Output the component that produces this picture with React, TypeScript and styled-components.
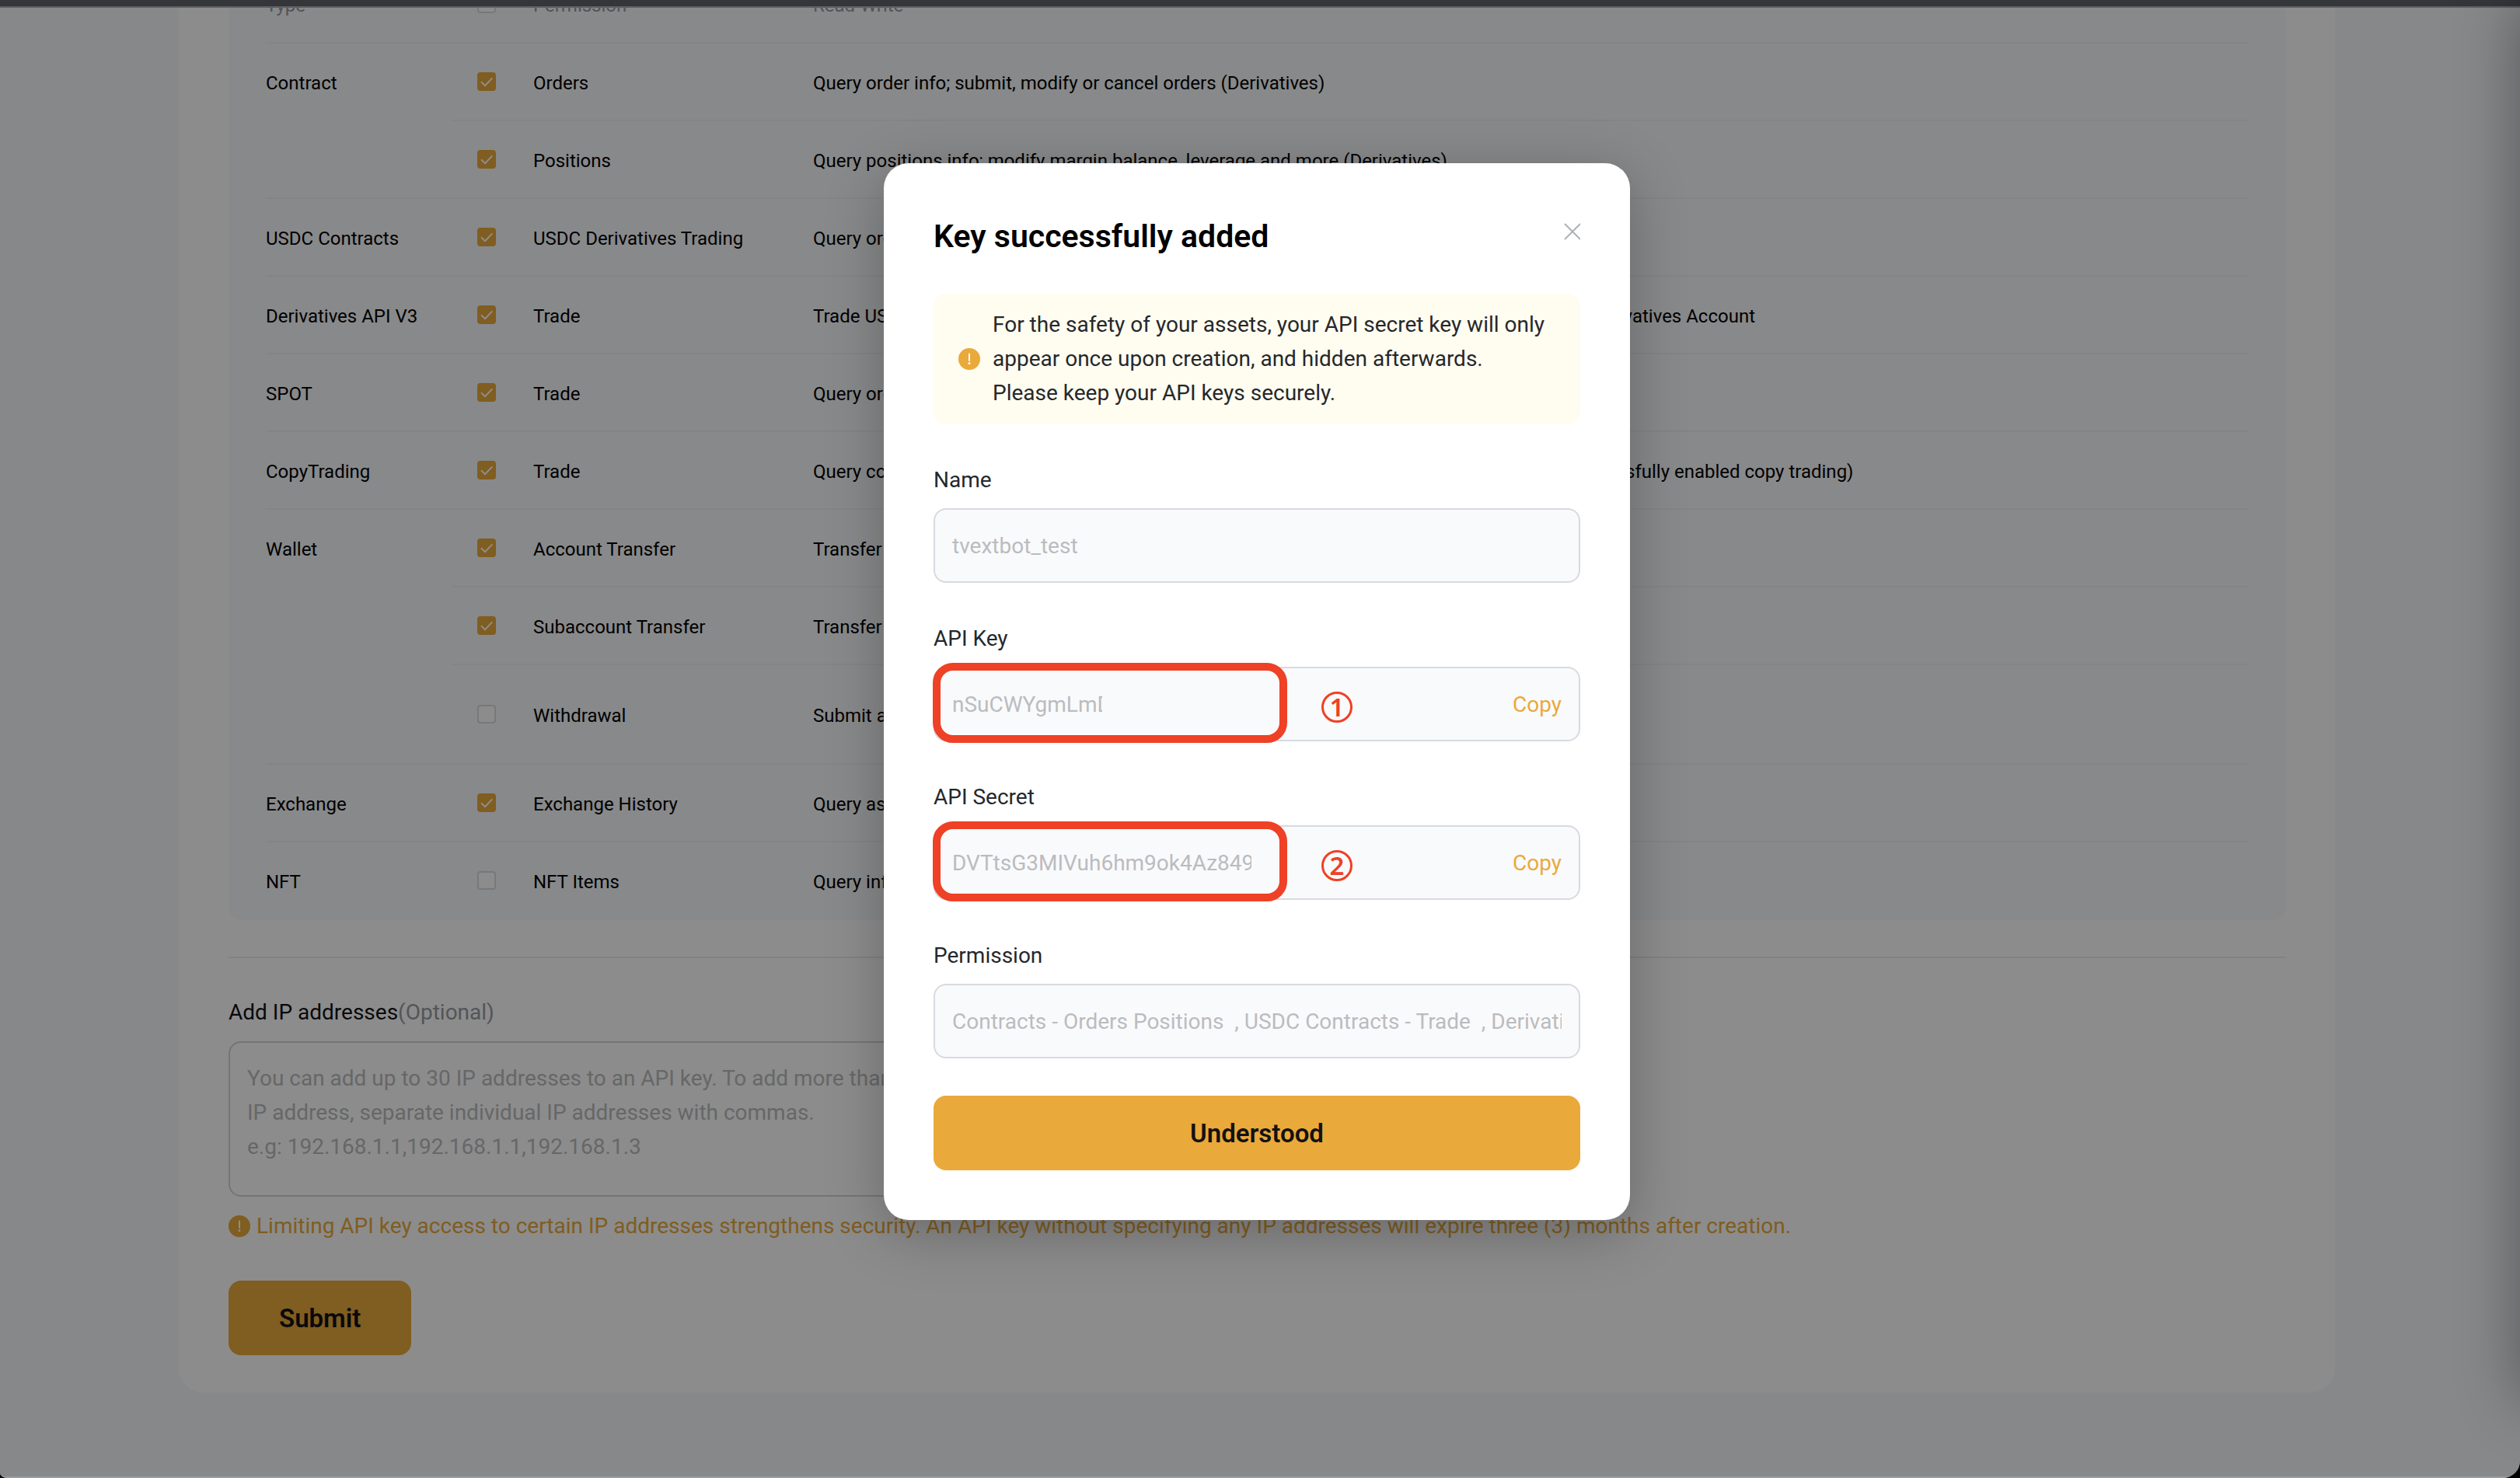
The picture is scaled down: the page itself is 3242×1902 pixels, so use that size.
import React from 'react';
import styled, { createGlobalStyle } from 'styled-components';

const gold = '#eaa93b';
const line = '#d7dae0';
const muted = '#bbbcbe';
const secondary = '#979ba3';
const marker = '#ee4126';

const GlobalStyle = createGlobalStyle`
  * { box-sizing: border-box; }
  body {
    margin: 0;
    background: #000;
    color: #000;
    font-family: Roboto, "Liberation Sans", sans-serif;
    font-size: 28px;
    line-height: 44px;
  }
  button, input, textarea { font: inherit; }
`;

const Frame = styled.div`
  position: relative;
  display: flex;
  flex-direction: column;
  height: 100vh;
  overflow: hidden;
  background: #f5f7fa;
  border-radius: 0 0 22px 10px / 0 0 22px 6px;
`;

const BrowserEdge = styled.header`
  position: relative;
  z-index: 2;
  flex: none;
  height: 10px;
  background: #35363a;
  border-bottom: 2px solid #5f5f61;
`;

const BottomEdge = styled.footer`
  position: relative;
  z-index: 2;
  flex: none;
  height: 2px;
  background: #9c9d9e;
`;

const Content = styled.main`
  flex: 1;
  min-height: 0;
  overflow: hidden;
`;

const Card = styled.form`
  margin: -102px 238px 0 230px;
  padding: 0 64px 48px;
  background: #fff;
  border-radius: 32px;
`;

const Panel = styled.section`
  padding: 48px 48px 0;
  background: #f7f9fc;
  border-radius: 16px;
`;

const PermissionTable = styled.table`
  width: 100%;
  table-layout: fixed;
  border-collapse: separate;
  border-spacing: 0;
  font-size: 24px;
  line-height: 28px;
  text-align: left;
`;

const Col = styled.col<{ $width?: number }>`
  width: ${(p) => (p.$width ? `${p.$width}px` : 'auto')};
`;

const Row = styled.tr<{ $tall?: boolean }>`
  height: ${(p) => (p.$tall ? 128 : 100)}px;
  tbody &:last-child > td { border-bottom-color: transparent; }
`;

const Cell = styled.td`
  padding: 4px 0 0 32px;
  border-bottom: 2px solid #eff1f4;
  white-space: nowrap;
`;

const TypeCell = styled(Cell)`
  padding: 37px 0 0;
  vertical-align: top;
`;

const TickCell = styled(Cell)`
  padding-top: 0;
`;

const HeadCell = styled(Cell).attrs({ as: 'th' })<{ $flush?: boolean }>`
  padding-left: ${(p) => (p.$flush ? 0 : 32)}px;
  color: ${secondary};
  font-weight: 400;
`;

const TickWrap = styled.span`
  display: grid;
  width: 24px;
  height: 24px;
  > * { grid-area: 1 / 1; }
`;

const TickBox = styled.input.attrs({ type: 'checkbox' })`
  appearance: none;
  width: 24px;
  height: 24px;
  margin: 0;
  background: #fff;
  border: 2px solid ${line};
  border-radius: 4px;
  &:checked { background: ${gold}; border-color: ${gold}; }
  & + svg { display: none; pointer-events: none; }
  &:checked + svg { display: block; }
`;

const Divider = styled.hr`
  height: 2px;
  margin: 47px 0 48px;
  border: 0;
  background: #ebedf0;
`;

const IpLabel = styled.label`
  display: block;
  margin-bottom: 15px;
  color: #121214;
`;

const Optional = styled.span`
  color: ${secondary};
`;

const IpBox = styled.textarea`
  display: block;
  width: 1000px;
  height: 200px;
  padding: 24px 22px;
  background: transparent;
  border: 2px solid #d0d5da;
  border-radius: 16px;
  resize: none;
  overflow: hidden;
  &::placeholder { color: ${muted}; opacity: 1; }
`;

const Warning = styled.p`
  display: flex;
  align-items: center;
  gap: 8px;
  margin: 16px 0 48px;
  color: ${gold};
  white-space: nowrap;
`;

const PrimaryButton = styled.button<{ $block?: boolean }>`
  display: block;
  width: ${(p) => (p.$block ? '100%' : 'auto')};
  height: 96px;
  padding: 2px 65px 0;
  color: #121214;
  background: ${gold};
  border: 0;
  border-radius: 16px;
  font-size: 33px;
  font-weight: 600;
`;

const Overlay = styled.div`
  position: absolute;
  inset: 0;
  z-index: 1;
  display: flex;
  justify-content: center;
  align-items: flex-start;
  padding: 210px 8px 0 0;
  background: rgba(0, 0, 0, 0.45);
`;

const Modal = styled.div`
  width: 960px;
  padding: 64px;
  background: #fff;
  border-radius: 32px;
  box-shadow: 0 16px 72px rgba(0, 0, 0, 0.26);
`;

const ModalHead = styled.div`
  display: flex;
  justify-content: space-between;
  align-items: flex-start;
  margin-bottom: 46px;
`;

const Title = styled.h2`
  margin: 0;
  padding-top: 2px;
  font-size: 41px;
  line-height: 56px;
  font-weight: 600;
`;

const CloseButton = styled.button`
  display: flex;
  align-items: center;
  height: 48px;
  padding: 0;
  border: 0;
  background: none;
`;

const Notice = styled.div`
  display: flex;
  align-items: center;
  gap: 16px;
  padding: 18px 32px;
  color: #25282c;
  background: #fffcf0;
  border-radius: 16px;
`;

const NoticeText = styled.p`
  margin: 0;
  white-space: nowrap;
`;

const Field = styled.div`
  margin-top: 48px;
`;

const FieldLabel = styled.label`
  display: block;
  padding-top: 2px;
  margin-bottom: 14px;
  color: #25282c;
`;

const FieldBox = styled.div`
  position: relative;
  display: flex;
  align-items: center;
  justify-content: space-between;
  height: 96px;
  padding: 0 22px;
  background: #f9fafc;
  border: 2px solid ${line};
  border-radius: 16px;
`;

const FieldInput = styled.input<{ $width?: number }>`
  width: ${(p) => (p.$width ? `${p.$width}px` : '100%')};
  padding: 2px 0 0;
  color: ${muted};
  background: none;
  border: 0;
  outline: 0;
`;

const CopyButton = styled.button`
  padding: 2px 0 0;
  color: ${gold};
  background: none;
  border: 0;
`;

const Highlight = styled.div`
  position: absolute;
  top: -7px;
  left: -3px;
  width: 456px;
  height: 103px;
  border: 10px solid ${marker};
  border-radius: 26px;
  pointer-events: none;
`;

const StepMark = styled.span`
  position: absolute;
  top: 30px;
  left: 497px;
  display: flex;
  align-items: center;
  justify-content: center;
  width: 40px;
  height: 40px;
  color: ${marker};
  border: 3px solid ${marker};
  border-radius: 50%;
  font-family: "Noto Sans", sans-serif;
  font-size: 33px;
  font-weight: 600;
  line-height: 34px;
`;

const ModalAction = styled.div`
  margin-top: 48px;
`;

const SideShadow = styled.div`
  position: absolute;
  z-index: 3;
  top: 0;
  bottom: 100px;
  left: 100%;
  width: 200px;
  box-shadow: 0 0 80px rgba(0, 0, 0, 0.36);
`;

const AlertIcon = () => (
  <svg width="28" height="28" viewBox="0 0 28 28" aria-hidden="true">
    <circle cx="14" cy="14" r="14" fill={gold} />
    <path d="M14 7.5v8.5" stroke="#fff" strokeWidth="2" strokeLinecap="round" />
    <circle cx="14" cy="19.6" r="1.5" fill="#fff" />
  </svg>
);

const Tick = ({ id, checked, label }: { id: string; checked: boolean; label?: string }) => (
  <TickWrap>
    <TickBox id={id} defaultChecked={checked} aria-label={label} />
    <svg width="24" height="24" viewBox="0 0 24 24" fill="none" aria-hidden="true">
      <path d="M5 12.2l5 5L19.4 7.4" stroke="#fff" strokeWidth="2" />
    </svg>
  </TickWrap>
);

type Permission = { name: string; on: boolean; access: string; tall?: boolean };

const groups: { type: string; items: Permission[] }[] = [
  {
    type: 'Contract',
    items: [
      { name: 'Orders', on: true, access: 'Query order info; submit, modify or cancel orders (Derivatives)' },
      { name: 'Positions', on: true, access: 'Query positions info; modify margin balance, leverage and more (Derivatives)' },
    ],
  },
  { type: 'USDC Contracts', items: [{ name: 'USDC Derivatives Trading', on: true, access: 'Query order info; submit, modify or cancel orders (USDC Derivatives)' }] },
  {
    type: 'Derivatives API V3',
    items: [{ name: 'Trade', on: true, access: 'Trade USDT Perpetual, USDC Perpetual, USDC Options and Inverse contracts via the Unified or Derivatives Account' }],
  },
  { type: 'SPOT', items: [{ name: 'Trade', on: true, access: 'Query order info; submit or cancel orders (Spot)' }] },
  {
    type: 'CopyTrading',
    items: [{ name: 'Trade', on: true, access: 'Query copy trading info; submit, modify or cancel orders (only for Master Traders who have successfully enabled copy trading)' }],
  },
  {
    type: 'Wallet',
    items: [
      { name: 'Account Transfer', on: true, access: 'Transfer assets between accounts' },
      { name: 'Subaccount Transfer', on: true, access: 'Transfer assets between main account and subaccounts' },
      { name: 'Withdrawal', on: false, access: 'Submit asset withdrawal requests', tall: true },
    ],
  },
  { type: 'Exchange', items: [{ name: 'Exchange History', on: true, access: 'Query asset exchange history' }] },
  { type: 'NFT', items: [{ name: 'NFT Items', on: false, access: 'Query info of NFT items' }] },
];

const ipHint =
  'You can add up to 30 IP addresses to an API key. To add more than one\nIP address, separate individual IP addresses with commas.\ne.g: 192.168.1.1,192.168.1.1,192.168.1.3';

type FieldProps = { id: string; label: string; value: string; width?: number; step?: number };

const ReadonlyField = ({ id, label, value, width, step }: FieldProps) => (
  <Field>
    <FieldLabel htmlFor={id}>{label}</FieldLabel>
    <FieldBox>
      <FieldInput id={id} value={value} $width={width} readOnly />
      {step && (
        <>
          <CopyButton type="button">Copy</CopyButton>
          <Highlight />
          <StepMark>{step}</StepMark>
        </>
      )}
    </FieldBox>
  </Field>
);

export default function App() {
  return (
    <>
      <GlobalStyle />
      <Frame>
        <BrowserEdge />
        <Content>
          <Card onSubmit={(e) => e.preventDefault()}>
            <Panel>
              <PermissionTable>
                <colgroup>
                  <Col $width={240} />
                  <Col $width={72} />
                  <Col $width={360} />
                  <Col />
                </colgroup>
                <thead>
                  <Row>
                    <HeadCell $flush>Type</HeadCell>
                    <TickCell as="th">
                      <Tick id="all" checked={false} label="Select all" />
                    </TickCell>
                    <HeadCell>Permission</HeadCell>
                    <HeadCell>Read-Write</HeadCell>
                  </Row>
                </thead>
                <tbody>
                  {groups.map((group) =>
                    group.items.map((item, i) => {
                      const id = `${group.type}-${item.name}`.replace(/\s/g, '-');
                      return (
                        <Row key={id} $tall={item.tall}>
                          {i === 0 && <TypeCell rowSpan={group.items.length}>{group.type}</TypeCell>}
                          <TickCell>
                            <Tick id={id} checked={item.on} />
                          </TickCell>
                          <Cell>
                            <label htmlFor={id}>{item.name}</label>
                          </Cell>
                          <Cell>{item.access}</Cell>
                        </Row>
                      );
                    }),
                  )}
                </tbody>
              </PermissionTable>
            </Panel>
            <Divider />
            <IpLabel htmlFor="ips">
              Add IP addresses<Optional>(Optional)</Optional>
            </IpLabel>
            <IpBox id="ips" placeholder={ipHint} />
            <Warning>
              <AlertIcon />
              Limiting API key access to certain IP addresses strengthens security. An API key without specifying any IP
              addresses will expire three (3) months after creation.
            </Warning>
            <PrimaryButton type="submit">Submit</PrimaryButton>
          </Card>
        </Content>
        <BottomEdge />
        <Overlay>
          <Modal role="dialog" aria-labelledby="dialog-title">
            <ModalHead>
              <Title id="dialog-title">Key successfully added</Title>
              <CloseButton type="button" aria-label="Close">
                <svg width="22" height="22" viewBox="0 0 22 22" fill="none" aria-hidden="true">
                  <path d="M2 1l20 20M22 1L2 21" stroke="#adb1b8" strokeWidth="2" />
                </svg>
              </CloseButton>
            </ModalHead>
            <Notice>
              <AlertIcon />
              <NoticeText>
                For the safety of your assets, your API secret key will only
                <br />
                appear once upon creation, and hidden afterwards.
                <br />
                Please keep your API keys securely.
              </NoticeText>
            </Notice>
            <ReadonlyField id="name" label="Name" value="tvextbot_test" />
            <ReadonlyField id="key" label="API Key" value="nSuCWYgmLmD" width={193} step={1} />
            <ReadonlyField id="secret" label="API Secret" value="DVTtsG3MIVuh6hm9ok4Az849" width={385} step={2} />
            <ReadonlyField
              id="permission"
              label="Permission"
              value={'Contracts - Orders Positions\u00a0 , USDC Contracts - Trade\u00a0 , Derivatives'}
            />
            <ModalAction>
              <PrimaryButton type="button" $block>
                Understood
              </PrimaryButton>
            </ModalAction>
          </Modal>
        </Overlay>
        <SideShadow />
      </Frame>
    </>
  );
}
